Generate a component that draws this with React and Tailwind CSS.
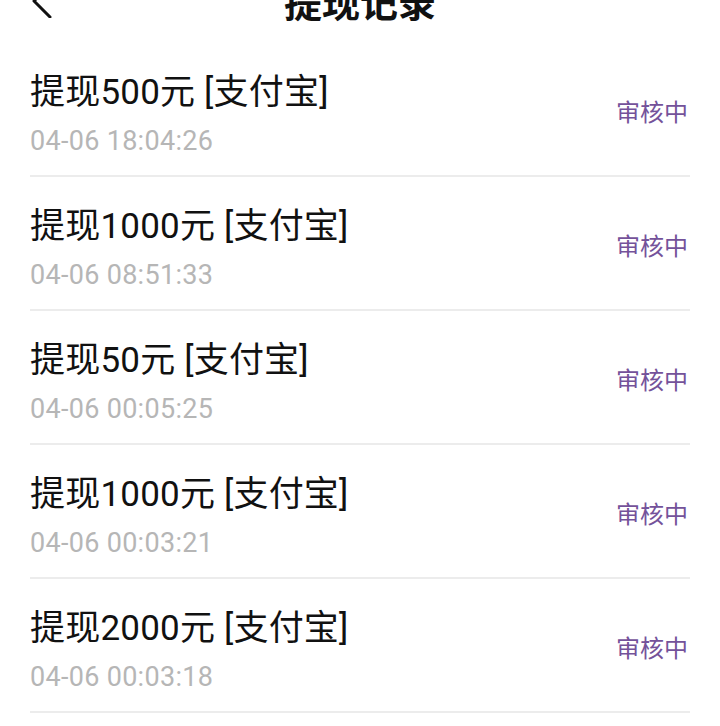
import React from 'react';

const records = [
  { amount: 500, time: '04-06 18:04:26' },
  { amount: 1000, time: '04-06 08:51:33' },
  { amount: 50, time: '04-06 00:05:25' },
  { amount: 1000, time: '04-06 00:03:21' },
  { amount: 2000, time: '04-06 00:03:18' },
];

const font = { fontFamily: 'Roboto, "Noto Sans CJK SC", sans-serif' };

const App = () => {
  return (
    <div className="w-[720px] h-[726px] bg-white overflow-hidden" style={font}>
      <div className="h-[43px] flex items-start justify-between px-[30px]">
        <svg width="24" height="34" viewBox="0 0 24 34" className="mt-[-16px]" fill="none">
          <path d="M20 1 L4 17 L20 33" stroke="#111" strokeWidth="3" strokeLinecap="round" strokeLinejoin="round" />
        </svg>
        <h1 className="mt-[-15px] text-[38px] leading-[38px] font-bold text-[#111]">提现记录</h1>
        <div className="w-[24px]" />
      </div>
      <div className="px-[30px]">
        {records.map((r, i) => (
          <div key={i} className="flex items-center justify-between border-b-2 border-[#ececec] pt-[30px] pb-[18px]">
            <div className="flex flex-col gap-[12px]">
              <p className="text-[35px] leading-[40px] tracking-[0.2px] text-[#111]">提现{r.amount}元 [支付宝]</p>
              <p className="text-[27px] leading-[32px] tracking-[0.3px] text-[#b6b6b6]">{r.time}</p>
            </div>
            <span className="text-[24px] leading-[32px] text-[#74529a] mr-[2px] mb-[4px]">审核中</span>
          </div>
        ))}
      </div>
    </div>
  );
};

export default App;
